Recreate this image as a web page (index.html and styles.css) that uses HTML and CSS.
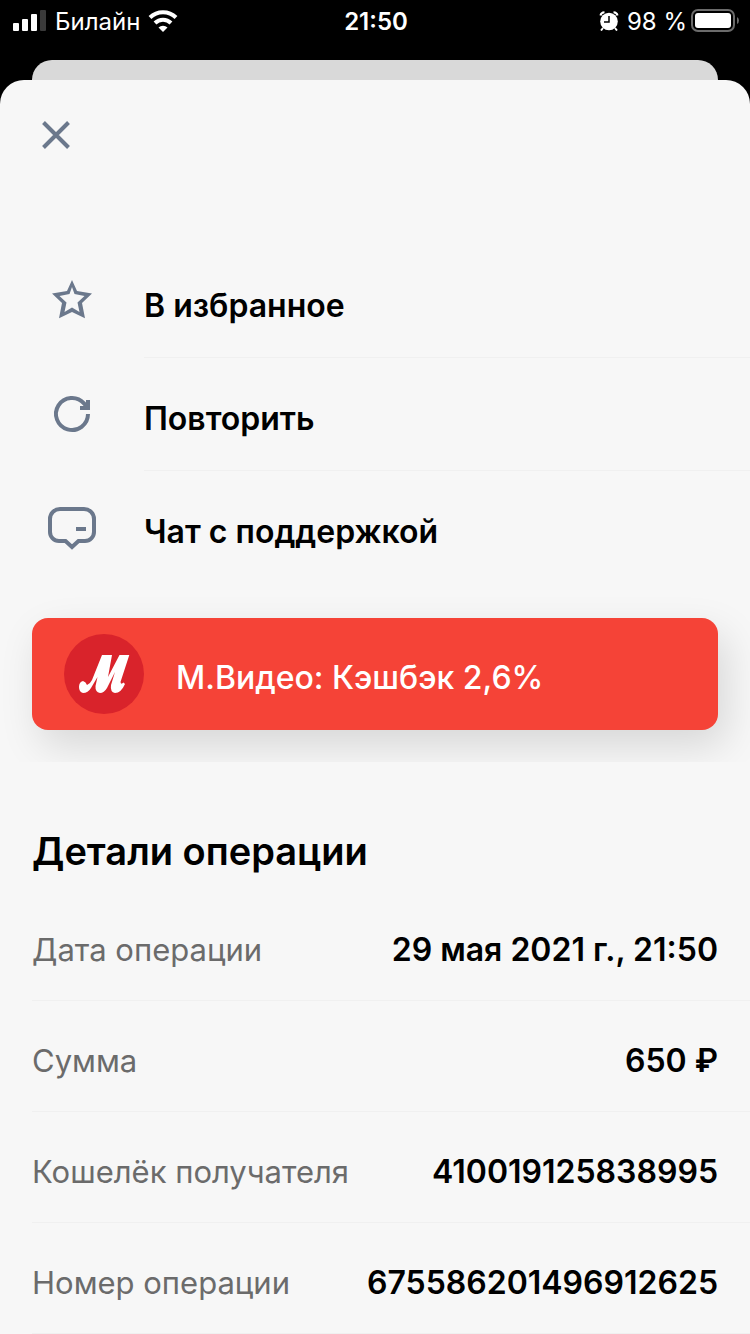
FILE: index.html
```html
<!DOCTYPE html>
<html lang="ru">
<head>
    <meta charset="UTF-8">
    <meta name="viewport" content="width=device-width, initial-scale=1.0">
    <title>Детали операции</title>
    <link rel="stylesheet" href="styles.css">
</head>
<body>
    <header class="status-bar">
        <div class="status-left">
            <svg class="signal" width="34" height="22" viewBox="0 0 34 22" aria-hidden="true">
                <rect x="0" y="13" width="6" height="8" rx="1" fill="#fff"/>
                <rect x="9" y="9" width="6" height="12" rx="1" fill="#fff"/>
                <rect x="18" y="4" width="6" height="17" rx="1" fill="#fff"/>
                <rect x="27" y="0" width="6" height="21" rx="1" fill="#3a3a3a"/>
            </svg>
            <span class="status-text">Билайн</span>
            <svg class="wifi" width="30" height="22" viewBox="0 0 30 22" aria-hidden="true">
                <path d="M2 7.500a18.500 18.500 0 0 1 26 0M7 13a11.500 11.500 0 0 1 16 0" fill="none" stroke="#fff" stroke-width="4"/>
                <path d="M15 22l-4.500-4.500a6.400 6.400 0 0 1 9 0z" fill="#fff"/>
            </svg>
        </div>
        <time class="status-text clock">21:50</time>
        <div class="status-right">
            <svg class="alarm" width="20" height="20" viewBox="0 0 20 20" aria-hidden="true">
                <circle cx="10" cy="10.500" r="8.800" fill="#fff"/>
                <path d="M1.500 4.500Q2 1.500 5.500 1.300M18.500 4.500Q18 1.500 14.500 1.300M4 17l-2 2.500M16 17l2 2.500" fill="none" stroke="#fff" stroke-width="2"/>
                <path d="M10 5v6H5" fill="none" stroke="#000" stroke-width="1.500"/>
            </svg>
            <span class="status-text">98 %</span>
            <svg class="battery" width="48" height="24" viewBox="0 0 48 24" aria-hidden="true">
                <rect x="1" y="1" width="42" height="21" rx="6" fill="none" stroke="#6b6b6b" stroke-width="2"/>
                <rect x="4" y="4" width="36" height="15" rx="3" fill="#fff"/>
                <path d="M46 8q2 1 2 3.500t-2 3.500z" fill="#6b6b6b"/>
            </svg>
        </div>
    </header>

    <div class="sheet-behind"></div>

    <main class="sheet">
        <div class="toolbar">
            <button class="close" type="button" aria-label="Закрыть">
                <svg width="28" height="28" viewBox="0 0 28 28" aria-hidden="true">
                    <path d="M1.500 1.500l25 25M26.500 1.500l-25 25" stroke="#6b788c" stroke-width="4"/>
                </svg>
            </button>
        </div>

        <div class="actions">
            <button class="action" type="button">
                <svg class="action-icon" width="48" height="48" viewBox="0 0 48 48" aria-hidden="true">
                    <path d="M24 3l5 11 15 2.500L34 26l3 15.300L24 35l-13 6.300L14 26 4 16.500 19 14zM24 10l-2.500 7-10 2 7 6.500-2 9.500 7.500-4.500 7.500 4.500-2-9.500 7-6.500-10-2z" fill="#6b788c" fill-rule="evenodd"/>
                </svg>
                <span class="action-text">В избранное</span>
            </button>
            <button class="action" type="button">
                <svg class="action-icon" width="48" height="48" viewBox="0 0 48 48" aria-hidden="true">
                    <path d="M40 24a16 16 0 1 1-4-10.600l3 3.500" fill="none" stroke="#6b788c" stroke-width="4"/>
                    <path d="M42 10v10H32v-4h4l2-2v-4z" fill="#6b788c"/>
                </svg>
                <span class="action-text">Повторить</span>
            </button>
            <button class="action" type="button">
                <svg class="action-icon" width="48" height="48" viewBox="0 0 48 48" aria-hidden="true">
                    <path d="M12 6h24a10 10 0 0 1 10 10v13a9 9 0 0 1-9 9h-6.500L24 44l-6.500-6H11a9 9 0 0 1-9-9V16A10 10 0 0 1 12 6z" fill="none" stroke="#6b788c" stroke-width="4"/>
                    <path d="M28 26h10" stroke="#6b788c" stroke-width="4"/>
                </svg>
                <span class="action-text">Чат с поддержкой</span>
            </button>
        </div>

        <div class="promo">
            <a class="banner" href="#">
                <svg class="banner-logo" width="80" height="80" viewBox="0 0 80 80" aria-hidden="true">
                    <circle cx="40" cy="40" r="40" fill="#d9232b"/>
                    <path d="M38 21H48L44 43 55.500 21H65.300L56.500 48Q57 51 59.500 48.500L61 50Q57 59 51 59 46 58 47 51L51 38 43 54Q40 59 36 59 31 58 31.500 52L33.500 43 27 54Q24 59 19 59 15 58 15 53 15 48 19 47 22 48 23 51 26 50 28 46z" fill="#fff"/>
                </svg>
                <span class="banner-text">М.Видео: Кэшбэк 2,6%</span>
            </a>
        </div>

        <section class="details">
            <h2>Детали операции</h2>
            <dl>
                <div class="row">
                    <dt>Дата операции</dt>
                    <dd>29 мая 2021 г., 21:50</dd>
                </div>
                <div class="row">
                    <dt>Сумма</dt>
                    <dd>650 ₽</dd>
                </div>
                <div class="row">
                    <dt>Кошелёк получателя</dt>
                    <dd>410019125838995</dd>
                </div>
                <div class="row">
                    <dt>Номер операции</dt>
                    <dd>675586201496912625</dd>
                </div>
            </dl>
        </section>
    </main>
</body>
</html>
```
FILE: styles.css
```css
* {
    box-sizing: border-box;
}

body {
    margin: 0;
    background-color: #000;
    color: #000;
    font-family: Inter, "Noto Sans", sans-serif;
    font-size: 32px;
    line-height: 40px;
}

svg {
    display: block;
    flex: none;
}

button {
    margin: 0;
    padding: 0;
    border: 0;
    background: none;
    color: inherit;
    font: inherit;
    text-align: left;
    cursor: pointer;
}

.status-bar {
    display: grid;
    grid-template-columns: 1fr auto 1fr;
    align-items: center;
    height: 60px;
    padding: 0 11px 20px 13px;
    color: #fff;
    font-size: 24px;
}

.status-left,
.status-right {
    display: flex;
    align-items: center;
    gap: 8px;
}

.status-right {
    justify-content: flex-end;
    gap: 4px;
}

.status-text {
    padding-top: 2px;
}

.alarm {
    margin-right: 4px;
}

.clock {
    font-weight: 600;
}

.sheet-behind {
    height: 20px;
    margin: 0 32px;
    border-radius: 20px 20px 0 0;
    background-color: #d9d9d9;
}

.sheet {
    border-radius: 24px 24px 0 0;
    background-color: #f7f7f7;
}

.toolbar {
    height: 165px;
    padding: 41px 42px;
}

.close {
    display: block;
}

.action {
    display: flex;
    align-items: flex-start;
    width: 100%;
    padding-left: 48px;
}

.action-icon {
    margin-top: 32px;
}

.action-text {
    flex: 1;
    margin-left: 48px;
    padding: 41px 0 31px;
    border-bottom: 1px solid #f0f0f0;
    font-weight: 600;
}

.action:last-child .action-text {
    border-color: transparent;
}

/* the banner shadow is cut at the block edge */
.promo {
    overflow: hidden;
    padding: 34px 32px 32px;
}

.banner {
    display: flex;
    align-items: center;
    gap: 32px;
    padding: 16px 32px;
    border-radius: 16px;
    background-color: #f54337;
    box-shadow: 8px 16px 40px rgba(0, 0, 0, 0.13);
    color: #fff;
    font-weight: 500;
    text-decoration: none;
}

.banner-text {
    padding-top: 8px;
}

.details {
    padding-left: 32px;
}

.details h2 {
    margin: 0;
    padding: 65px 0 15px;
    font-size: 38px;
    font-weight: 600;
    line-height: 48px;
}

.details dl {
    margin: 0;
}

.row {
    display: flex;
    justify-content: space-between;
    padding: 40px 32px 30px 0;
    border-bottom: 1px solid #f0f0f0;
}

.row dt {
    color: #6b6b6b;
    font-size: 31px;
}

.row dd {
    margin: 0;
    font-weight: 600;
}
```
